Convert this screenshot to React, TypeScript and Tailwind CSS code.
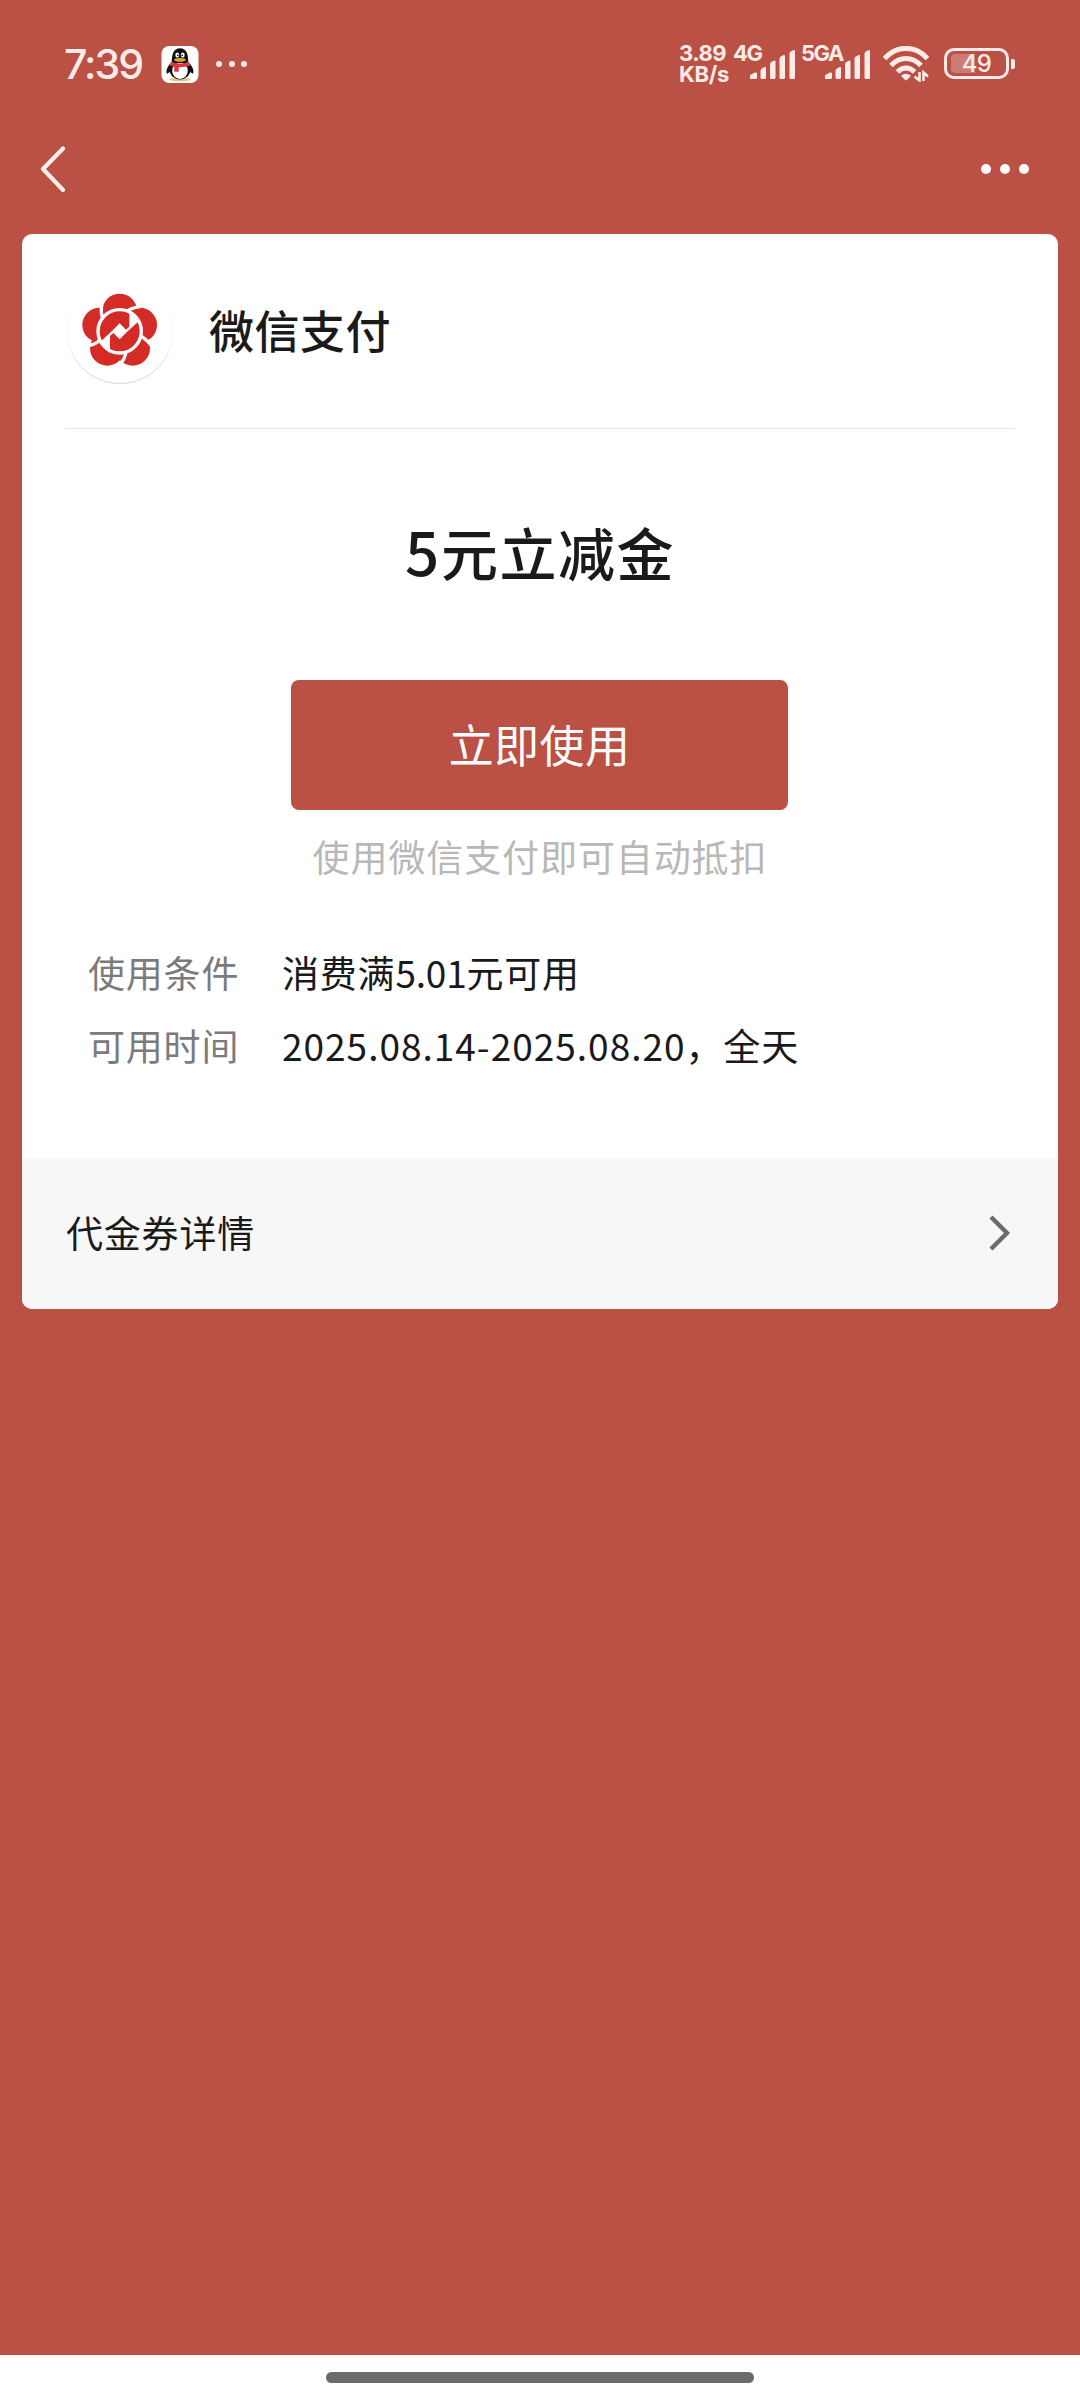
import React from 'react'

const PETALS = [
  [131, 75],
  [191, 117],
  [170, 187],
  [94, 187],
  [71, 117],
]

const QQIcon: React.FC = () => (
  <svg className="h-[37px] w-[38px]" viewBox="0 0 38 38">
    <rect width="38" height="38" rx="8" fill="#fff" />
    <ellipse cx="19" cy="34.3" rx="11" ry="1.8" fill="#e3c383" />
    <path d="M9 18C5.5 22 4.5 26 5.6 28.5c1.4 0 3-2 4-3.500zM29 18c3.500 4 4.500 8 3.400 10.500-1.400 0-3-2-4-3.500z" fill="#111" />
    <ellipse cx="19" cy="24.500" rx="11" ry="9.800" fill="#111" />
    <ellipse cx="19" cy="25.500" rx="8" ry="8.300" fill="#fff" />
    <path d="M10.500 17C10.500 7 13 2.200 19 2.200S27.500 7 27.500 17z" fill="#111" />
    <ellipse cx="16.200" cy="9.300" rx="2" ry="2.700" fill="#fff" />
    <ellipse cx="21.800" cy="9.300" rx="2" ry="2.700" fill="#fff" />
    <circle cx="16.800" cy="9.600" r="0.900" fill="#111" />
    <circle cx="21.300" cy="9.600" r="0.900" fill="#111" />
    <ellipse cx="19" cy="14.200" rx="6" ry="1.900" fill="#e2a638" />
    <path d="M9.500 16.200c6 2.400 13 2.400 19 0l.8 3.600c-3.500 1.600-7.500 2.200-11.600 2v4.600h-4.600v-5.300c-1.600-.4-3.200-.8-4.400-1.400z" fill="#dc3440" />
  </svg>
)

const SignalBars: React.FC = () => (
  <svg className="h-[30px] w-[45px]" viewBox="0 0 45 30" fill="#ffebe7">
    <path d="M0 28.500v-2.500q0-1 1-1.500l4-2q2-.5 2 1v4q0 1.500-1.500 1.500h-4Q0 29 0 28.500z" />
    <path d="M10.500 20.500q0-1.500 3-3 2.500-1 2.500.5v9.500q0 1.500-1.500 1.500h-2.500q-1.500 0-1.500-1.500z" />
    <path d="M20 14q0-1.500 3-3 2.500-1 2.500.5v16q0 1.500-1.500 1.500h-2.500q-1.500 0-1.500-1.500z" />
    <path d="M29.500 8.500q0-1.500 3-3 2.500-1 2.500.5v21.500q0 1.500-1.500 1.500h-2.500q-1.500 0-1.500-1.500z" />
    <path d="M39.500 3.500q0-1.500 3-3 2.500-1 2.500.5v26.500q0 1.500-1.500 1.500h-2.500q-1.500 0-1.500-1.500z" />
  </svg>
)

const WifiIcon: React.FC = () => (
  <svg className="h-[36px] w-[46px]" viewBox="0 0 46 36" fill="none" stroke="#ffebe7" strokeWidth="5">
    <path d="M1.500 12.500C13.500-1 32.500-1 44.500 12.500" />
    <path d="M8 19.500c8.500-9.300 21.500-9.300 30 0" />
    <path d="M14.500 26c4.800-5.300 12.200-5.300 17 0" />
    <path d="M18 29.800q5-4.300 10 0l-3.800 4q-1.200 1-2.400 0z" fill="#ffebe7" stroke="none" />
    <path d="M36.500 26v8.500l-5-4M40.500 35v-8.500l4.500 4" strokeWidth="2.600" />
  </svg>
)

const StatusBar: React.FC = () => (
  <div className="flex h-[128px] items-start justify-between pl-[64px] pr-[65px] text-[#ffebe7]">
    <div className="flex items-center pt-[45px]">
      <span className="w-[97px] font-['Inter'] text-[41px] leading-[38px] font-medium tracking-[-2px]">7:39</span>
      <QQIcon />
      <div className="ml-[17px] flex gap-[6.500px]">
        <i className="size-[6px] rounded-full bg-current" />
        <i className="size-[6px] rounded-full bg-current" />
        <i className="size-[6px] rounded-full bg-current" />
      </div>
    </div>
    <div className="flex pt-[43px] font-['Inter'] text-[22px] leading-[21px] font-bold">
      <div className="-ml-px w-[54px] whitespace-nowrap">
        <div className="tracking-[-0.500px]">3.89</div>
        <div className="tracking-[-0.300px]">KB/s</div>
      </div>
      <span className="w-[17px] whitespace-nowrap tracking-[-1.500px]">4G</span>
      <div className="pt-[7px]">
        <SignalBars />
      </div>
      <span className="ml-[6px] w-[24px] whitespace-nowrap tracking-[-1.500px]">5GA</span>
      <div className="pt-[7px]">
        <SignalBars />
      </div>
      <div className="ml-[13px] pt-[3px]">
        <WifiIcon />
      </div>
      <div className="ml-[15px] flex items-center self-start pt-[5px]">
        <div className="relative flex h-[31px] w-[65px] items-center justify-center rounded-[10px] border-[3.500px] border-current">
          <div className="absolute left-[4px] h-[19px] w-[24px] rounded-l-[4px] bg-white/25" />
          <span className="relative text-[24px] font-medium tracking-[-0.700px]">49</span>
        </div>
        <div className="ml-[2px] h-[10px] w-[4px] rounded-r-[2px] bg-current" />
      </div>
    </div>
  </div>
)

const NavBar: React.FC = () => (
  <div className="flex h-[106px] items-start justify-between pt-[17px] pr-[51px] pl-[39px]">
    <svg className="h-[48px] w-[26px]" viewBox="0 0 26 48" fill="none" stroke="#fff0eb" strokeWidth="4.2" strokeLinecap="round" strokeLinejoin="round">
      <path d="M24 3.500L4 24l20 21" />
    </svg>
    <div className="flex gap-[9px] pt-[19px]">
      <i className="size-[10px] rounded-full bg-white" />
      <i className="size-[10px] rounded-full bg-white" />
      <i className="size-[10px] rounded-full bg-white" />
    </div>
  </div>
)

const MerchantLogo: React.FC = () => (
  <div className="flex size-[106px] items-center justify-center rounded-full bg-white shadow-[0_1px_1px_rgba(0,0,0,0.16)]">
    <svg className="size-[88px]" viewBox="0 0 264 264">
      <g fill="#d52b27">
        {PETALS.map(([cx, cy]) => (
          <circle key={`${cx}-${cy}`} cx={cx} cy={cy} r="52" />
        ))}
      </g>
      <g fill="none" stroke="#fff" strokeWidth="10">
        <path d="M148 80Q162 66 192 62" />
        <path d="M82 98Q72 84 78 50" />
        <path d="M72 160Q62 176 30 180" />
        <path d="M150 196Q148 218 128 242" />
        <path d="M188 146Q208 156 226 178" />
      </g>
      <circle cx="131" cy="136" r="66" fill="#d52b27" />
      <path d="M131 112l19 19 10-9V70l32 32-37 34-24 24-19-19-10 9v52l-32-32 37-34z" fill="#fff" />
      <circle cx="131" cy="136" r="65" fill="none" stroke="#fff" strokeWidth="10" />
    </svg>
  </div>
)

const InfoRow: React.FC<{ label: string; children: React.ReactNode }> = ({ label, children }) => (
  <div className="flex h-[73px] items-center whitespace-nowrap">
    <span className="w-[194px] text-[#7b7b7b]">{label}</span>
    <span className="text-[#1a1a1a]">{children}</span>
  </div>
)

const App: React.FC = () => {
  return (
    <div className="flex h-[2400px] w-[1080px] flex-col bg-[#bb5044] font-['Noto_Sans_CJK_SC',sans-serif]">
      <StatusBar />
      <NavBar />

      <div className="mx-[22px] overflow-hidden rounded-[10px] bg-white">
        <div className="mx-[43px] flex h-[195px] items-start border-b border-[#e2e2e2] pt-[43px]">
          <div className="ml-[2px]">
            <MerchantLogo />
          </div>
          <span className="ml-[36px] pt-[20px] text-[45px] leading-[66px] font-medium tracking-[0.500px] text-[#1a1a1a]">微信支付</span>
        </div>

        <div className="flex h-[251px] justify-center pt-[79px] text-[57px] leading-[84px] text-[#1a1a1a]">
          <h1 className="font-medium tracking-[1.500px]">
            <span className="mr-[2px] text-[60px] tracking-normal">5</span>元立减金
          </h1>
        </div>

        <div className="flex flex-col items-center">
          <button className="mr-px h-[130px] w-[497px] rounded-[8px] bg-[#bb5044] pb-[2px] text-[45px] tracking-[0.400px] text-white">
            立即使用
          </button>
          <p className="pt-[19px] text-[37px] leading-[54px] tracking-[0.900px] text-[#b8b8b8]">使用微信支付即可自动抵扣</p>
        </div>

        <div className="h-[275px] pt-[53px] pl-[66px] text-[37px] tracking-[0.800px]">
          <InfoRow label="使用条件">
            消费满<span className="tracking-[-0.200px]">5.01</span>元可用
          </InfoRow>
          <InfoRow label="可用时间">
            <span className="tracking-[1px]">2025.08.14-2025.08.20</span>，全天
          </InfoRow>
        </div>

        <div className="flex h-[151px] items-center justify-between bg-[#f7f7f7] pr-[47px] pb-[2px] pl-[44px]">
          <span className="text-[37px] tracking-[0.800px] text-[#1a1a1a]">代金券详情</span>
          <svg className="h-[36px] w-[22px]" viewBox="0 0 22 36" fill="none" stroke="#6b6b6b" strokeWidth="4.4">
            <path d="M2 2l16 16L2 34" />
          </svg>
        </div>
      </div>

      <div className="mt-auto flex h-[45px] justify-center bg-white pt-[17px]">
        <div className="h-[11px] w-[428px] rounded-full bg-[#6b6b6b]" />
      </div>
    </div>
  )
}

export default App
